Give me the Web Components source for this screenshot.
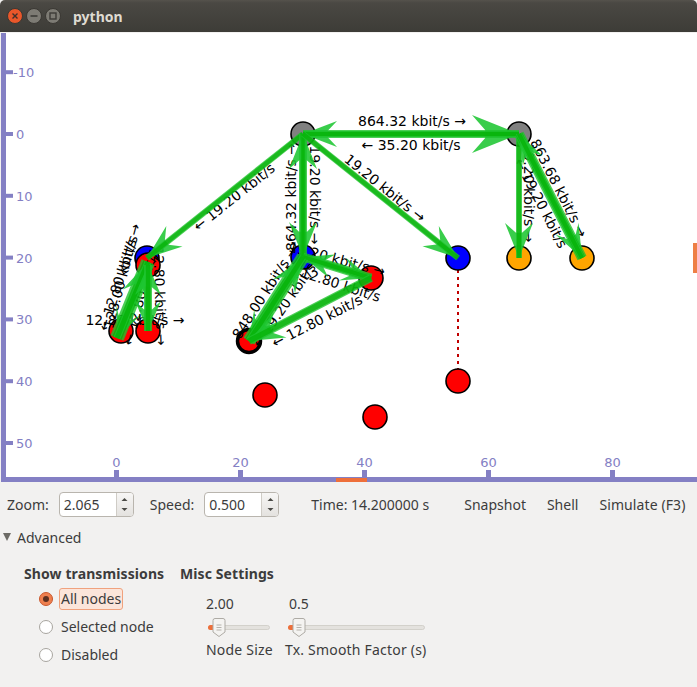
<!DOCTYPE html>
<html>
<head>
<meta charset="utf-8">
<title>python</title>
<style>
html, body { margin: 0; padding: 0; background: #f2f1f0; }
body { width: 697px; height: 687px; overflow: hidden; font-family: "Noto Sans", sans-serif; font-size: 14px; color: #3c3c3c; }
</style>
</head>
<body>
<sim-window>
    <title-bar slot="title" label="python"></title-bar>
    <sim-canvas slot="canvas"></sim-canvas>
    <control-bar slot="controls"></control-bar>
    <advanced-panel slot="advanced"></advanced-panel>
</sim-window>

<script>
class SimWindow extends HTMLElement {
    connectedCallback() {
        this.attachShadow({ mode: 'open' });
        this.shadowRoot.innerHTML = `
            <style>
                :host { display: flex; flex-direction: column; width: 697px; height: 687px; }
            </style>
            <slot name="title"></slot>
            <slot name="canvas"></slot>
            <slot name="controls"></slot>
            <slot name="advanced"></slot>
        `;
    }
}

class TitleBar extends HTMLElement {
    connectedCallback() {
        this.attachShadow({ mode: 'open' });
        this.shadowRoot.innerHTML = `
            <style>
                :host {
                    display: flex;
                    align-items: center;
                    height: 32px;
                    box-sizing: border-box;
                    padding-left: 7px;
                    background: linear-gradient(#55524c 0, #4a4843 3px, #3d3c37 100%);
                    border-radius: 5px 5px 0 0;
                }
                .btn { width: 16px; height: 16px; margin-right: 3px; display: block; }
                .name {
                    margin-left: 9px;
                    font: bold 14px "Noto Sans", sans-serif;
                    color: #dfdbd2;
                }
            </style>
            <svg class="btn" viewBox="0 0 16 16">
                <circle cx="8" cy="8" r="7.5" fill="#e9572a" stroke="#3a3833"/>
                <path d="M5.5 5.5l5 5M10.5 5.5l-5 5" stroke="#40302a" stroke-width="1.4" fill="none"/>
            </svg>
            <svg class="btn" viewBox="0 0 16 16">
                <circle cx="8" cy="8" r="7.5" fill="#7d7b74" stroke="#3a3833"/>
                <path d="M4.5 8h7" stroke="#3c3b37" stroke-width="1.6" fill="none"/>
            </svg>
            <svg class="btn" viewBox="0 0 16 16">
                <circle cx="8" cy="8" r="7.5" fill="#7d7b74" stroke="#3a3833"/>
                <rect x="5" y="5" width="6" height="6" stroke="#3c3b37" stroke-width="1.4" fill="none"/>
            </svg>
            <span class="name">${this.getAttribute('label')}</span>
        `;
    }
}

const PX = x => 116.5 + x * 6.2;
const PY = y => 134 + y * 6.18;

const NODES = [
    [303, 134, '#808080', 1.6], [519, 134, '#808080', 1.6],
    [147, 258, '#0000ff', 1.6], [303, 257, '#0000ff', 1.6], [458, 258, '#0000ff', 1.6],
    [519, 258, '#ffa500', 1.6], [582, 258, '#ffa500', 1.6],
    [148, 265, '#ff0000', 1.6], [371, 278, '#ff0000', 1.6],
    [121, 331, '#ff0000', 1.6], [148, 331, '#ff0000', 1.6],
    [249, 341, '#ff0000', 3.5], [265, 395, '#ff0000', 1.6],
    [458, 381, '#ff0000', 1.6], [375, 417, '#ff0000', 1.6]
];

// x1, y1, x2, y2, shaft width, head length, head half width
const ARROWS = [
    [303, 134, 519, 134, 8, 47, 19],
    [519, 134, 303, 134, 6, 34, 13],
    [303, 134, 147, 258, 6, 35, 13],
    [303, 134, 303, 257, 8, 35, 14],
    [303, 257, 303, 134, 5, 35, 14],
    [303, 134, 458, 258, 6, 35, 13],
    [519, 134, 519, 258, 6, 35, 14],
    [519, 134, 582, 258, 10, 33, 13],
    [582, 258, 519, 134, 6, 30, 11],
    [303, 257, 371, 278, 9, 30, 12],
    [371, 278, 303, 257, 6, 30, 12],
    [303, 257, 249, 341, 13, 30, 13],
    [249, 341, 303, 257, 7, 35, 13],
    [371, 278, 249, 341, 8, 35, 14],
    [148, 262, 117, 338, 14, 30, 13],
    [117, 338, 148, 262, 7, 35, 13],
    [148, 265, 148, 331, 8, 30, 13],
    [148, 331, 148, 265, 6, 30, 13]
];

// centre x, centre y, rotation, text
const LABELS = [
    [412, 121, 0, '864.32 kbit/s →'],
    [411, 145, 0, '← 35.20 kbit/s'],
    [234, 197, -38.5, '← 19.20 kbit/s'],
    [385, 188, 38.7, '19.20 kbit/s →'],
    [291, 197, -90, '864.32 kbit/s →'],
    [315, 195, 90, '19.20 kbit/s →'],
    [529, 193, 90, '19.20 kbit/s →'],
    [559, 188, 62.8, '863.68 kbit/s →'],
    [541, 203, 62.8, '← 19.20 kbit/s'],
    [337, 259, 15, '19.20 kbit/s →'],
    [333, 282, 18, '← 12.80 kbit/s'],
    [265, 292, -57, '848.00 kbit/s →'],
    [284, 305, -55, '← 19.20 kbit/s'],
    [317, 321, -27, '← 12.80 kbit/s'],
    [122, 276, -75, '128.00 kbit/s →'],
    [118, 283, -72, '← 12.80 kbit/s'],
    [160, 296, 88, '12.80 kbit/s →'],
    [140, 297, -75, '← 12.80 kbit/s'],
    [135, 320, 0, '12.80 kbit/s →']
];

function arrowShape(x1, y1, x2, y2, w, len, half) {
    const d = Math.hypot(x2 - x1, y2 - y1), ux = (x2 - x1) / d, uy = (y2 - y1) / d;
    const nx = -uy, ny = ux;
    const at = (along, side) => (x2 - ux * along + nx * side).toFixed(1) + ',' + (y2 - uy * along + ny * side).toFixed(1);
    const head = [at(0, 0), at(len, half), at(len * 0.72, w / 2), at(len * 0.72, -w / 2), at(len, -half)].join(' ');
    return `
        <polygon points="${head}" fill="rgba(30,198,50,0.88)"/>
        <line x1="${x1}" y1="${y1}" x2="${x2}" y2="${y2}" stroke="rgba(30,195,45,0.8)" stroke-width="${w}"/>
        <line x1="${x1}" y1="${y1}" x2="${x2}" y2="${y2}" stroke="rgba(0,175,0,0.65)" stroke-width="${w * 0.7}"/>`;
}

class SimCanvas extends HTMLElement {
    connectedCallback() {
        this.attachShadow({ mode: 'open' });
        const nodes = NODES.map(([x, y, c, s]) =>
            `<circle cx="${x}" cy="${y}" r="${s > 2 ? 11.5 : 12}" fill="${c}" stroke="#000" stroke-width="${s}"/>`).join('');
        const arrows = ARROWS.map(a => arrowShape(...a)).join('');
        const labels = LABELS.map(([x, y, r, t]) =>
            `<text transform="translate(${x} ${y}) rotate(${r})" class="lbl">${t}</text>`).join('');
        let ticks = '';
        for (const v of [0, 20, 40, 60, 80]) {
            ticks += `<rect x="${PX(v) - 2.5}" y="470" width="5" height="8" fill="#8480c4"/>`;
            ticks += `<text x="${PX(v)}" y="467" class="axis" text-anchor="middle">${v}</text>`;
        }
        for (const v of [-10, 0, 10, 20, 30, 40, 50]) {
            ticks += `<rect x="6" y="${PY(v) - 2}" width="7" height="4" fill="#8480c4"/>`;
            ticks += `<text x="${v < 0 ? 13 : 16}" y="${PY(v) + 5}" class="axis">${v}</text>`;
        }
        this.shadowRoot.innerHTML = `
            <style>
                :host { display: block; height: 450px; }
                svg { display: block; }
                .lbl { font: 14px "DejaVu Sans", sans-serif; fill: #000; text-anchor: middle; dominant-baseline: central; }
                .axis { font: 13px "DejaVu Sans", sans-serif; fill: #8480c4; }
            </style>
            <svg width="697" height="450" viewBox="0 32 697 450">
                <rect x="0" y="32" width="697" height="450" fill="#f2f1f0"/>
                <rect x="6" y="33" width="691" height="444" fill="#fff"/>
                <line x1="458" y1="270" x2="458" y2="369" stroke="#c00000" stroke-width="2" stroke-dasharray="3 4"/>
                ${nodes}
                ${labels}
                ${arrows}
                <rect x="1" y="33" width="5" height="449" fill="#8480c4"/>
                <rect x="1" y="477" width="696" height="5" fill="#8480c4"/>
                ${ticks}
                <rect x="336" y="478" width="31" height="4" fill="#ee6f3a"/>
                <rect x="693" y="243" width="4" height="30" fill="#ee7f45"/>
            </svg>
        `;
    }
}

class SpinBox extends HTMLElement {
    connectedCallback() {
        this.attachShadow({ mode: 'open' });
        this.shadowRoot.innerHTML = `
            <style>
                :host {
                    display: flex;
                    width: 75px;
                    height: 25px;
                    box-sizing: border-box;
                    border: 1px solid #b9b5ae;
                    border-radius: 4px;
                    background: #fff;
                    overflow: hidden;
                }
                .val { flex: 1; padding-left: 4px; line-height: 23px; color: #3c3c3c; }
                .btns {
                    width: 16px;
                    border-left: 1px solid #cfccc6;
                    background: linear-gradient(#f7f6f5, #e4e2df);
                    display: flex;
                    align-items: center;
                    justify-content: center;
                }
            </style>
            <span class="val">${this.getAttribute('value')}</span>
            <span class="btns">
                <svg width="7" height="15" viewBox="0 0 7 15">
                    <path d="M0.5 4L3.5 1L6.5 4z" fill="#4a4a46"/>
                    <path d="M0.5 11L3.5 14L6.5 11z" fill="#4a4a46"/>
                </svg>
            </span>
        `;
    }
}

class ControlBar extends HTMLElement {
    connectedCallback() {
        this.attachShadow({ mode: 'open' });
        this.shadowRoot.innerHTML = `
            <style>
                :host {
                    display: flex;
                    align-items: center;
                    height: 45px;
                    box-sizing: border-box;
                    padding: 0 0 0 7px;
                    white-space: nowrap;
                }
                .a { margin-right: 10px; }
                .b { margin-right: 16px; }
                .time { margin-left: 32px; width: 153px; }
                .btn { margin-right: 21px; }
                .sim { letter-spacing: 0.1px; }
            </style>
            <span class="a">Zoom:</span><spin-box class="b" value="2.065"></spin-box>
            <span class="a">Speed:</span><spin-box value="0.500"></spin-box>
            <span class="time">Time: 14.200000 s</span>
            <span class="btn">Snapshot</span>
            <span class="btn">Shell</span>
            <span class="sim">Simulate (F3)</span>
        `;
    }
}

class RadioItem extends HTMLElement {
    connectedCallback() {
        this.attachShadow({ mode: 'open' });
        const on = this.hasAttribute('checked');
        this.shadowRoot.innerHTML = `
            <style>
                :host { display: flex; align-items: center; height: 28px; }
                .dot {
                    width: 14px; height: 14px; box-sizing: border-box;
                    border-radius: 50%;
                    border: 1px solid ${on ? '#c9572c' : '#a8a59f'};
                    background: ${on ? '#ee7f4e' : '#fff'};
                    display: flex; align-items: center; justify-content: center;
                    margin-right: 6px;
                }
                .dot i { width: 6px; height: 6px; border-radius: 50%; background: #5c3020; display: ${on ? 'block' : 'none'}; }
                .txt {
                    padding: 1px 1px;
                    border: 1px solid ${on ? '#f0a27e' : 'transparent'};
                    border-radius: 3px;
                    background: ${on ? '#fbe5da' : 'none'};
                    line-height: 18px;
                }
            </style>
            <span class="dot"><i></i></span>
            <span class="txt"><slot></slot></span>
        `;
    }
}

class SimSlider extends HTMLElement {
    connectedCallback() {
        this.attachShadow({ mode: 'open' });
        const w = this.getAttribute('track');
        this.shadowRoot.innerHTML = `
            <style>
                :host { display: flex; flex-direction: column; white-space: nowrap; min-width: 67px; }
                .val { padding-left: ${this.getAttribute('pad')}px; height: 21px; line-height: 20px; }
                .track { height: 26px; display: block; margin-left: ${this.getAttribute('inset')}px; }
                .name { height: 20px; line-height: 20px; margin-top: -1px; letter-spacing: 0.2px; }
            </style>
            <span class="val">${this.getAttribute('value')}</span>
            <svg class="track" width="${w}" height="26" viewBox="0 0 ${w} 26">
                <rect x="0.5" y="10.5" width="${w - 1}" height="4" rx="2" fill="#e4e2de" stroke="#cdcac4" stroke-width="0.8"/>
                <rect x="0" y="10" width="7" height="5" rx="2.5" fill="#ee6f3a"/>
                <path d="M5 5.5a2 2 0 0 1 2-2h8a2 2 0 0 1 2 2V17l-6 4.5L5 17z" fill="#f4f3f1" stroke="#aeaba5"/>
                <path d="M8.5 10h5M8.5 12.5h5M8.5 15h5" stroke="#b5b2ac" stroke-width="1"/>
            </svg>
            <span class="name"><slot></slot></span>
        `;
    }
}

class AdvancedPanel extends HTMLElement {
    connectedCallback() {
        this.attachShadow({ mode: 'open' });
        this.shadowRoot.innerHTML = `
            <style>
                :host { display: block; padding: 0 0 0 3px; }
                .head { display: flex; align-items: center; height: 20px; margin-bottom: 17px; }
                .head svg { margin-right: 6px; }
                .cols { display: flex; padding-left: 21px; }
                h4 { margin: 0; font-size: 14px; font-weight: bold; line-height: 20px; letter-spacing: 0.1px; }
                .show { width: 156px; }
                .radios { padding: 1px 0 0 15px; }
                .sliders { display: flex; gap: 12px; margin: 10px 0 0 26px; }
            </style>
            <div class="head">
                <svg width="8" height="8" viewBox="0 0 8 8"><path d="M0 0H8L4 8z" fill="#6d6b66"/></svg>
                <span>Advanced</span>
            </div>
            <div class="cols">
                <div class="show">
                    <h4>Show transmissions</h4>
                    <div class="radios">
                        <radio-item checked>All nodes</radio-item>
                        <radio-item>Selected node</radio-item>
                        <radio-item>Disabled</radio-item>
                    </div>
                </div>
                <div>
                    <h4>Misc Settings</h4>
                    <div class="sliders">
                        <sim-slider value="2.00" track="62" pad="0" inset="2">Node Size</sim-slider>
                        <sim-slider value="0.5" track="137" pad="4" inset="3">Tx. Smooth Factor (s)</sim-slider>
                    </div>
                </div>
            </div>
        `;
    }
}

customElements.define('sim-window', SimWindow);
customElements.define('title-bar', TitleBar);
customElements.define('sim-canvas', SimCanvas);
customElements.define('spin-box', SpinBox);
customElements.define('control-bar', ControlBar);
customElements.define('radio-item', RadioItem);
customElements.define('sim-slider', SimSlider);
customElements.define('advanced-panel', AdvancedPanel);
</script>
</body>
</html>
